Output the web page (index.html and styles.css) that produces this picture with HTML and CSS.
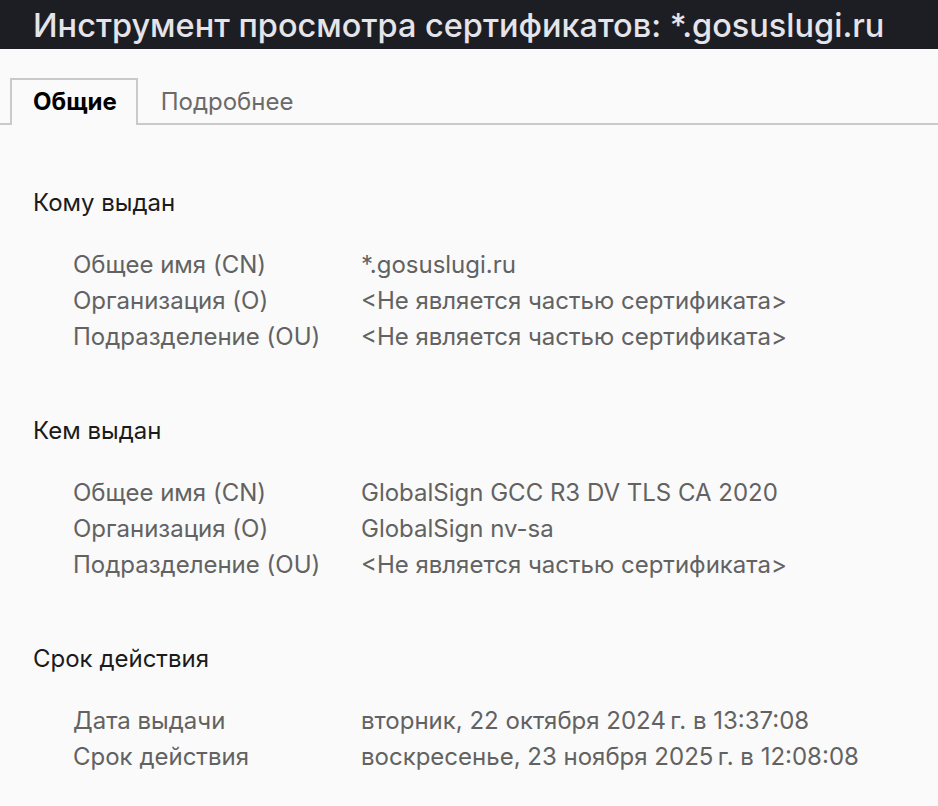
FILE: index.html
```html
<!DOCTYPE html>
<html lang="ru">
<head>
<meta charset="utf-8">
<title>Инструмент просмотра сертификатов</title>
<link rel="stylesheet" href="styles.css">
</head>
<body>
<header class="titlebar">Инструмент просмотра сертификатов: *.gosuslugi.ru</header>
<nav class="tabs">
  <div class="tab tab-active">Общие</div>
  <div class="tab">Подробнее</div>
</nav>
<main class="content">
  <section class="section">
    <h2 class="section-title">Кому выдан</h2>
    <div class="rows">
      <div class="label">Общее имя (CN)</div><div class="value">*.gosuslugi.ru</div>
      <div class="label">Организация (O)</div><div class="value">&lt;Не является частью сертификата&gt;</div>
      <div class="label">Подразделение (OU)</div><div class="value">&lt;Не является частью сертификата&gt;</div>
    </div>
  </section>
  <section class="section">
    <h2 class="section-title">Кем выдан</h2>
    <div class="rows">
      <div class="label">Общее имя (CN)</div><div class="value">GlobalSign GCC R3 DV TLS CA 2020</div>
      <div class="label">Организация (O)</div><div class="value">GlobalSign nv-sa</div>
      <div class="label">Подразделение (OU)</div><div class="value">&lt;Не является частью сертификата&gt;</div>
    </div>
  </section>
  <section class="section">
    <h2 class="section-title">Срок действия</h2>
    <div class="rows">
      <div class="label">Дата выдачи</div><div class="value">вторник, 22 октября 2024&#8239;г. в 13:37:08</div>
      <div class="label">Срок действия</div><div class="value">воскресенье, 23 ноября 2025&#8239;г. в 12:08:08</div>
    </div>
  </section>
</main>
</body>
</html>
```

FILE: styles.css
```css
html, body {
  margin: 0;
  padding: 0;
  background: #fafafa;
}
body {
  font-family: Inter, "Noto Sans", "DejaVu Sans", sans-serif;
  color: #1b1b1b;
}
.titlebar {
  height: 49px;
  background: #1c1e23;
  color: #e4e4ea;
  font-size: 32.5px;
  font-weight: 500;
  line-height: 52px;
  padding-left: 33px;
  white-space: nowrap;
  overflow: hidden;
}
.tabs {
  display: flex;
  margin-top: 29px;
  padding-left: 10px;
  border-bottom: 2px solid #c9c9c9;
}
.tab {
  box-sizing: border-box;
  height: 45px;
  display: flex;
  align-items: center;
  padding: 0 19px 0 21px;
  font-size: 24px;
  color: #6a6a6a;
  border: 2px solid transparent;
  border-bottom: none;
}
.tab-active {
  color: #000;
  font-weight: 700;
  border-color: #c9c9c9;
  background: #fafafa;
  margin-bottom: -2px;
  height: 47px;
  padding-bottom: 2px;
}
.content {
  padding: 64px 33px 0;
}
.section + .section {
  margin-top: 62px;
}
.section-title {
  margin: 0;
  font-size: 24px;
  font-weight: 400;
  line-height: 28px;
  color: #1b1b1b;
}
.rows {
  display: grid;
  grid-template-columns: 288px auto;
  margin-top: 30px;
  padding-left: 40px;
  font-size: 24px;
  line-height: 36px;
  color: #626262;
}
```
